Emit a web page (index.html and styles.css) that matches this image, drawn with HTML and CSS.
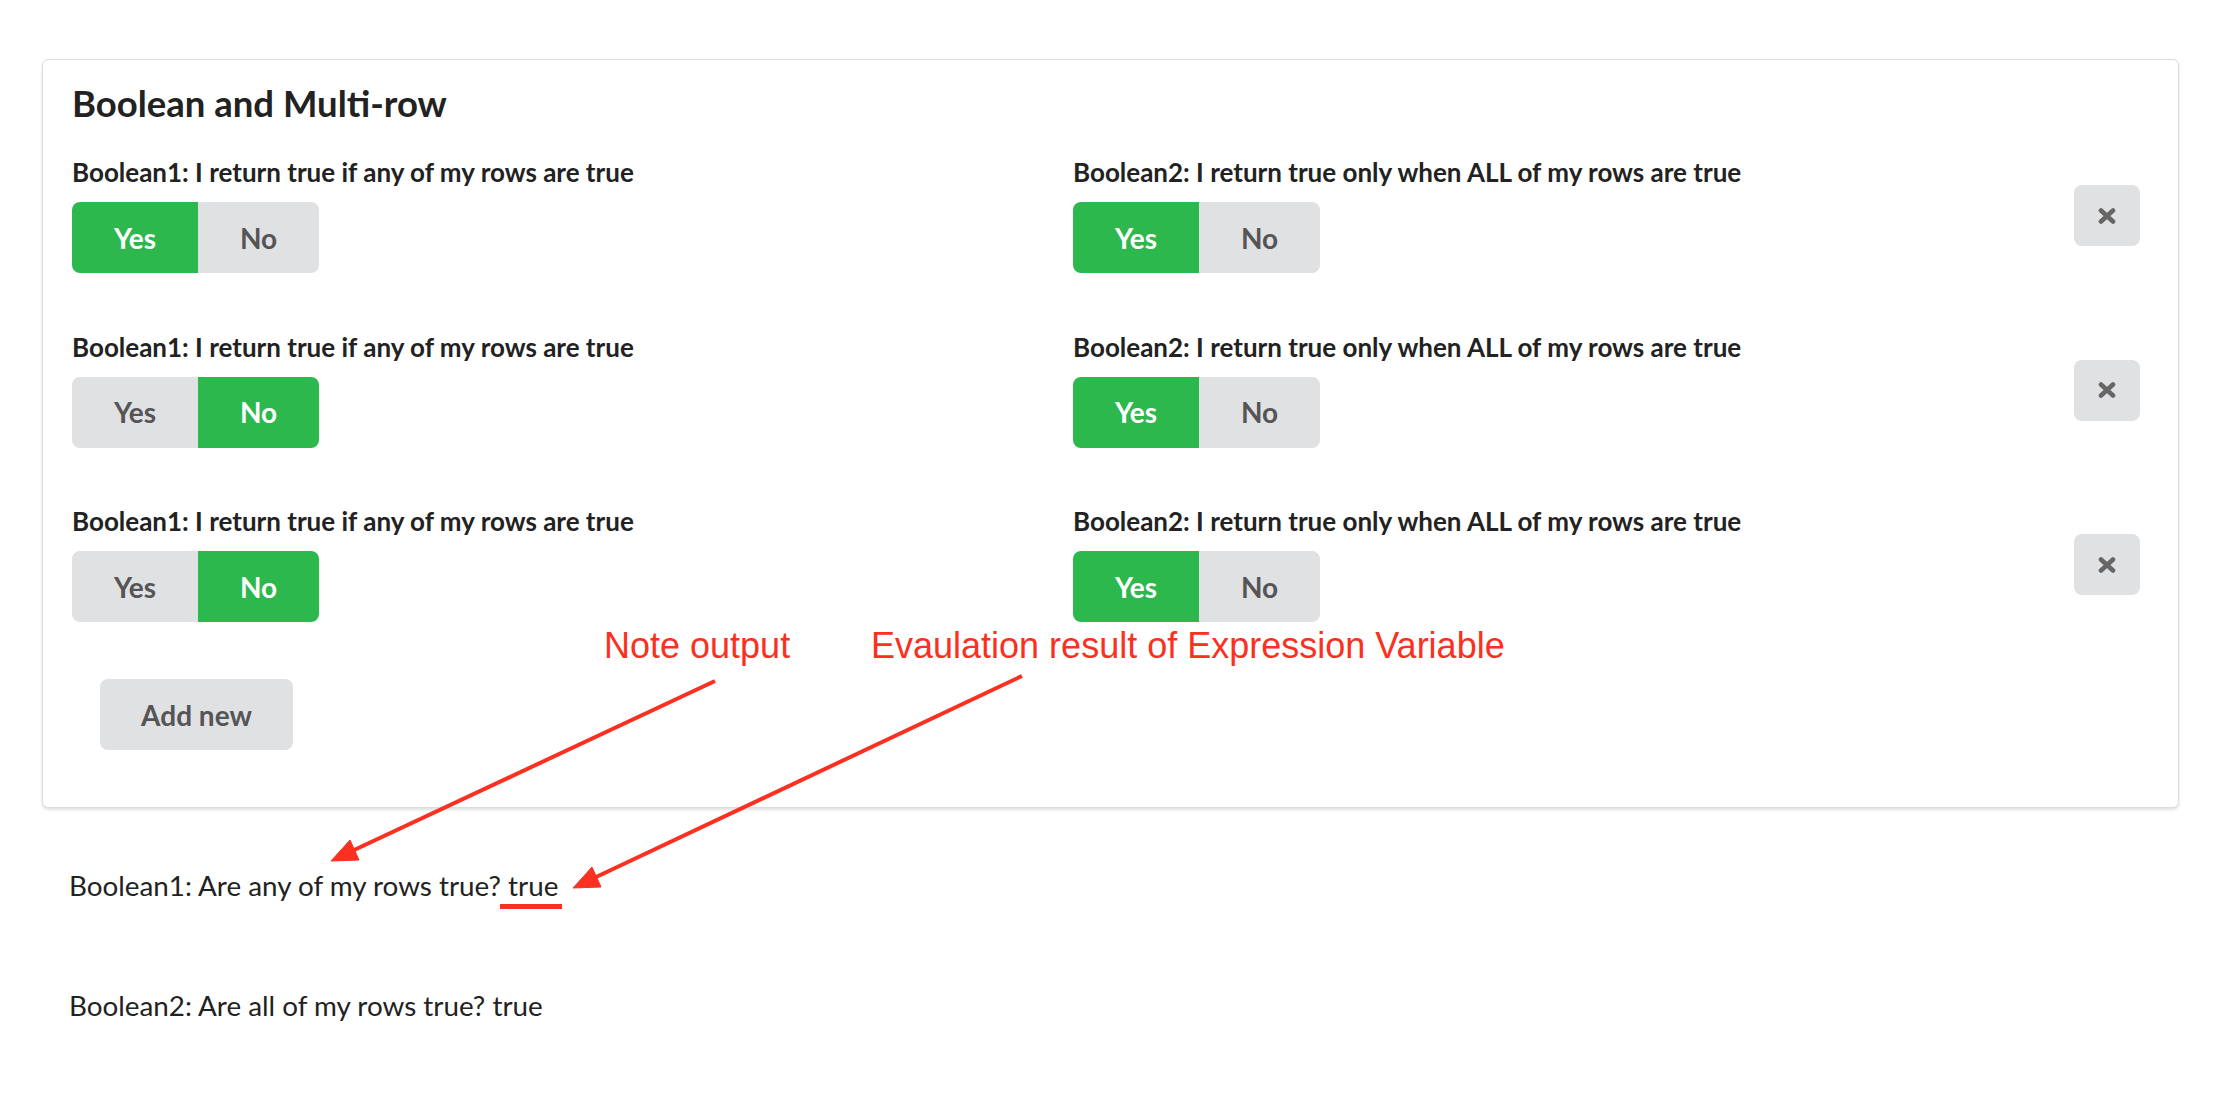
FILE: index.html
```html
<!DOCTYPE html>
<html lang="en">
<head>
<meta charset="utf-8">
<title>Boolean and Multi-row</title>
<link rel="stylesheet" href="styles.css">
</head>
<body>
<div class="page">
  <section class="card">
    <h2 class="card-title">Boolean and Multi-row</h2>
    <div class="rows">
      <div class="row">
        <div class="field">
          <label class="field-label">Boolean1: I return true if any of my rows are true</label>
          <div class="toggle"><span class="opt opt-yes on">Yes</span><span class="opt opt-no">No</span></div>
        </div>
        <div class="field">
          <label class="field-label">Boolean2: I return true only when ALL of my rows are true</label>
          <div class="toggle"><span class="opt opt-yes on">Yes</span><span class="opt opt-no">No</span></div>
        </div>
        <button class="del" type="button" aria-label="Remove"><svg viewBox="0 0 18 16" width="18" height="16"><path d="M3 2.5 L15 13.5 M15 2.5 L3 13.5" stroke="#666" stroke-width="4.6" stroke-linecap="round"/></svg></button>
      </div>
      <div class="row">
        <div class="field">
          <label class="field-label">Boolean1: I return true if any of my rows are true</label>
          <div class="toggle"><span class="opt opt-yes">Yes</span><span class="opt opt-no on">No</span></div>
        </div>
        <div class="field">
          <label class="field-label">Boolean2: I return true only when ALL of my rows are true</label>
          <div class="toggle"><span class="opt opt-yes on">Yes</span><span class="opt opt-no">No</span></div>
        </div>
        <button class="del" type="button" aria-label="Remove"><svg viewBox="0 0 18 16" width="18" height="16"><path d="M3 2.5 L15 13.5 M15 2.5 L3 13.5" stroke="#666" stroke-width="4.6" stroke-linecap="round"/></svg></button>
      </div>
      <div class="row">
        <div class="field">
          <label class="field-label">Boolean1: I return true if any of my rows are true</label>
          <div class="toggle"><span class="opt opt-yes">Yes</span><span class="opt opt-no on">No</span></div>
        </div>
        <div class="field">
          <label class="field-label">Boolean2: I return true only when ALL of my rows are true</label>
          <div class="toggle"><span class="opt opt-yes on">Yes</span><span class="opt opt-no">No</span></div>
        </div>
        <button class="del" type="button" aria-label="Remove"><svg viewBox="0 0 18 16" width="18" height="16"><path d="M3 2.5 L15 13.5 M15 2.5 L3 13.5" stroke="#666" stroke-width="4.6" stroke-linecap="round"/></svg></button>
      </div>
    </div>
    <button class="add" type="button">Add new</button>
  </section>
  <p class="note note-first">Boolean1: Are any of my rows true? true</p>
  <p class="note note-second">Boolean2: Are all of my rows true? true</p>

  <div class="annot">
    <svg class="annot-svg" width="2220" height="1098" viewBox="0 0 2220 1098">
      <g fill="#fa3020" stroke="#fa3020">
        <line x1="715" y1="681" x2="352" y2="851" stroke-width="4"/>
        <polygon points="331,861 359,860 350,840" stroke-width="1"/>
        <line x1="1022" y1="676" x2="594" y2="878" stroke-width="4"/>
        <polygon points="573,888 601,887 592,867" stroke-width="1"/>
        <rect x="500" y="904" width="62" height="5" stroke="none"/>
      </g>
    </svg>
    <span class="annot-text annot-note">Note output</span>
    <span class="annot-text annot-eval">Evaulation result of Expression Variable</span>
  </div>
</div>
</body>
</html>
```

FILE: styles.css
```css
html, body {
  margin: 0;
  padding: 0;
  background: #fff;
}

body {
  font-family: Lato, "Liberation Sans", sans-serif;
  color: #222;
}

.page {
  position: relative;
  width: 2220px;
  height: 1098px;
  box-sizing: border-box;
  padding: 59px 41px 0 42px;
  overflow: hidden;
}

.card {
  border: 1px solid #dcdcdc;
  border-radius: 6px;
  box-shadow: 0 2px 3px rgba(0, 0, 0, 0.12);
  padding: 24px 38px 57px 29px;
  background: #fff;
}

.card-title {
  margin: 0;
  font-size: 36.5px;
  line-height: 38px;
  font-weight: 700;
  color: #222;
}

.rows {
  margin-top: 36px;
  display: flex;
  flex-direction: column;
  gap: 59.5px;
}

.row {
  display: grid;
  grid-template-columns: 1fr 1fr 66px;
  align-items: center;
}

.field {
  display: flex;
  flex-direction: column;
  align-items: flex-start;
}

.field-label {
  display: block;
  font-size: 26px;
  line-height: 29px;
  font-weight: 700;
  color: #222;
  margin-bottom: 15px;
}

.toggle {
  display: flex;
  height: 71px;
  border-radius: 8px;
  overflow: hidden;
}

.opt {
  display: flex;
  align-items: center;
  justify-content: center;
  height: 71px;
  font-size: 28px;
  font-weight: 700;
  background: #e0e1e3;
  color: #555;
}

.opt-yes { width: 126px; }
.opt-no { width: 121px; }

.opt.on {
  background: #2db84e;
  color: #fff;
}

.del {
  width: 66px;
  height: 61px;
  border: 0;
  border-radius: 8px;
  background: #e0e1e3;
  padding: 0;
  display: flex;
  align-items: center;
  justify-content: center;
  cursor: pointer;
}

.add {
  margin: 57px 0 0 28px;
  width: 193px;
  height: 71px;
  border: 0;
  border-radius: 8px;
  background: #e0e1e3;
  color: #555;
  font-family: Lato, "Liberation Sans", sans-serif;
  font-size: 28px;
  font-weight: 700;
  padding: 0;
  cursor: pointer;
}

.note {
  margin: 0;
  font-size: 27.8px;
  line-height: 34px;
  color: #222;
  padding-left: 27px;
}

.note-first { margin-top: 61px; }
.note-second { margin-top: 86px; }

.annot {
  position: absolute;
  top: 0;
  left: 0;
  width: 2220px;
  height: 1098px;
  pointer-events: none;
}

.annot-svg {
  position: absolute;
  top: 0;
  left: 0;
}

.annot-text {
  position: absolute;
  font-family: "Liberation Sans", Arial, sans-serif;
  font-size: 36px;
  line-height: 40px;
  color: #fa3020;
  white-space: nowrap;
}

.annot-note { left: 604px; top: 626px; }
.annot-eval { left: 871px; top: 626px; }
```
